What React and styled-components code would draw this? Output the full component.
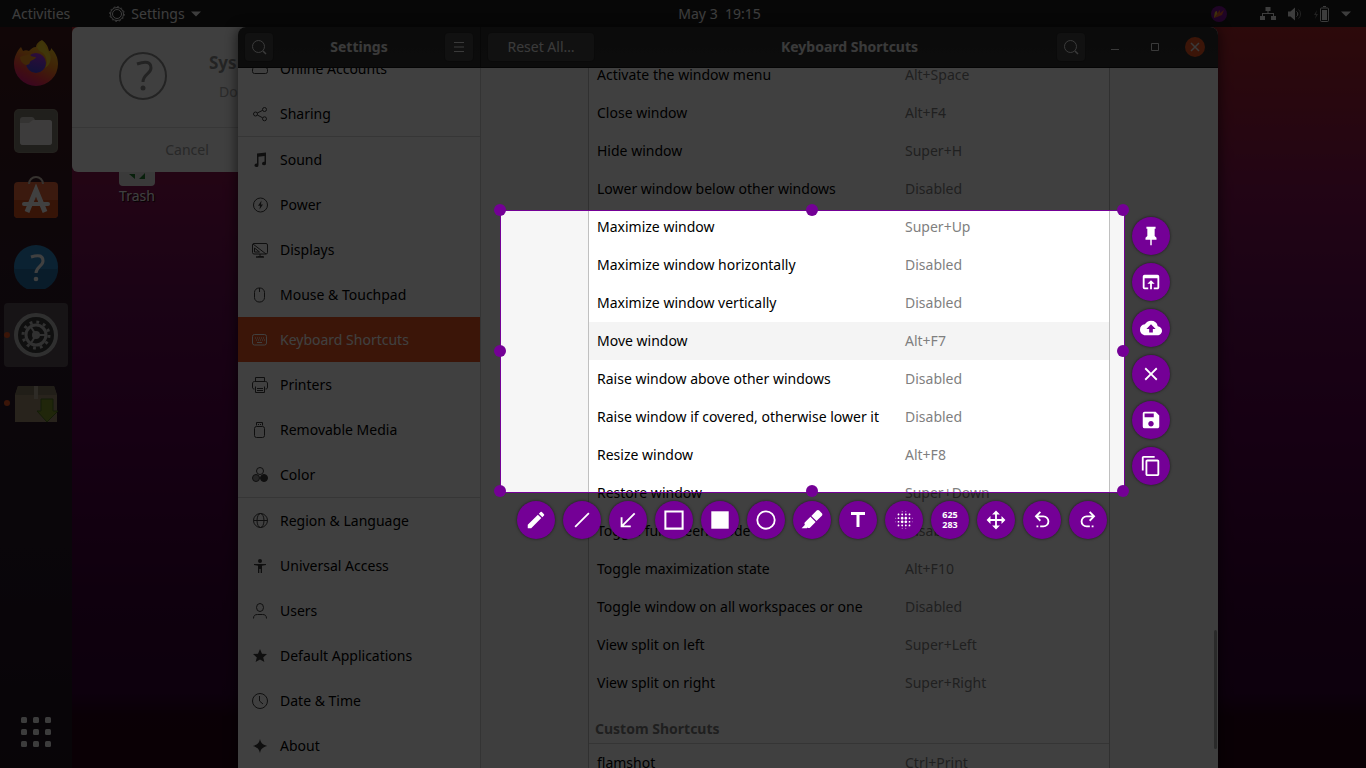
import React from "react";
import styled, { createGlobalStyle } from "styled-components";
import {
  MdBlurOn,
  MdClose,
  MdCloudUpload,
  MdContentCopy,
  MdEdit,
  MdOpenInBrowser,
  MdSave,
  MdTitle,
} from "react-icons/md";

const GlobalStyle = createGlobalStyle`
  * {
    box-sizing: border-box;
  }

  body {
    margin: 0;
    font-family: "Noto Sans", "Open Sans", sans-serif;
    font-size: 14px;
    line-height: 20px;
    color: #000;
  }

  button {
    margin: 0;
    padding: 0;
    border: 0;
    background: none;
    font: inherit;
    color: inherit;
  }

  svg {
    display: block;
    flex: none;
  }
`;

const Screen = styled.div`
  position: relative;
  display: flex;
  flex-direction: column;
  height: 100vh;
  overflow: hidden;
`;

/* Top panel */

const TopBar = styled.header`
  display: grid;
  grid-template-columns: 1fr auto 1fr;
  align-items: center;
  height: 27px;
  flex: none;
  padding: 0 15px 0 12px;
  background: #1c1c1c;
  color: #f2f2f2;
`;

const TopLeft = styled.div`
  display: flex;
  align-items: center;
  gap: 39px;
`;

const AppMenu = styled.button`
  display: flex;
  align-items: center;
  gap: 6px;
`;

const Clock = styled.button`
  padding-left: 76px;
  white-space: pre;
`;

const Tray = styled.div`
  display: flex;
  align-items: center;
  justify-content: flex-end;
  gap: 11px;

  svg:first-child {
    margin-right: 22px;
  }
`;

/* Desktop and dock */

const Desktop = styled.div`
  display: flex;
  flex: 1;
  min-height: 0;
  background: linear-gradient(
    #b0282c 0%,
    #9c1c40 12%,
    #881454 22%,
    #680c54 38%,
    #58004c 55%,
    #3c0038 78%,
    #340034 90%,
    #280018 93%,
    #280014 100%
  );
`;

const Dock = styled.nav`
  display: flex;
  flex-direction: column;
  gap: 4px;
  width: 72px;
  flex: none;
  padding: 4px;
  background: linear-gradient(#44181c, #301c2c 40%, #28182a 70%, #20141f);
`;

const DockItem = styled.button`
  position: relative;
  display: flex;
  align-items: center;
  justify-content: center;
  width: 64px;
  height: 64px;
  border-radius: 4px;
  background: ${(props) => (props.$active ? "#5c5058" : "none")};

  &:last-child {
    margin-top: auto;
  }
`;

const RunningDot = styled.span`
  position: absolute;
  left: 0;
  width: 6px;
  height: 6px;
  border-radius: 3px;
  background: #e95420;
`;

const Workspace = styled.main`
  position: relative;
  isolation: isolate;
  flex: 1;
  min-width: 0;
`;

const TrashIcon = styled.div`
  position: absolute;
  top: 123px;
  left: 37px;
  display: flex;
  flex-direction: column;
  align-items: center;
  width: 56px;
  color: #fff;
  text-shadow: 1px 1px 1px #000;
`;

const Dialog = styled.section`
  position: absolute;
  top: 0;
  left: 0;
  width: 460px;
  border-radius: 6px;
  background: #fafafa;
`;

const DialogBody = styled.div`
  display: flex;
  gap: 42px;
  height: 101px;
  padding: 25px 0 0 47px;
  border-bottom: 1px solid #dcdcdc;
`;

const DialogText = styled.div`
  display: flex;
  flex-direction: column;
  gap: 8px;
  color: #a8a8a8;

  h2 {
    margin: 0;
    font-size: 17px;
    line-height: 22px;
    color: #8c8c8c;
  }

  p {
    margin: 0;
    padding-left: 10px;
  }
`;

const DialogButton = styled.button`
  width: 50%;
  height: 44px;
  color: #a0a0a0;
`;

/* Settings window */

const Window = styled.section`
  position: absolute;
  top: 0;
  bottom: 0;
  left: 166px;
  right: 148px;
  display: grid;
  grid-template-columns: 243px 1fr;
  grid-template-rows: 41px 1fr;
  border-radius: 8px 8px 0 0;
  overflow: hidden;
  background: #f6f6f6;
  box-shadow: 0 2px 12px 2px rgba(0, 0, 0, 0.5);
`;

const HeaderBar = styled.header`
  z-index: 1;
  display: grid;
  grid-template-columns: 1fr auto 1fr;
  align-items: center;
  padding: 0 7px;
  background: linear-gradient(#2c2c2c, #323232);
  border-bottom: 1px solid #161616;
  border-right: ${(props) => (props.$split ? "1px solid #1c1c1c" : "0")};
  color: #e8e8e8;

  h1 {
    margin: 0;
    font-size: 14px;
    line-height: 20px;
  }
`;

const HeaderButton = styled.button`
  display: flex;
  align-items: center;
  justify-content: center;
  width: ${(props) => (props.$wide ? "106px" : "28px")};
  height: 28px;
  border-radius: 4px;
  background: #444;
  box-shadow: 0 0 0 1px #2a2a2a;
`;

const HeaderEnd = styled.div`
  display: flex;
  align-items: center;
  justify-content: flex-end;
  gap: 20px;
  padding-right: ${(props) => (props.$controls ? "6px" : "0")};
`;

const WindowButton = styled.button`
  display: flex;
  align-items: center;
  justify-content: center;
  width: 20px;
  height: 20px;
  border-radius: 10px;
  background: ${(props) => (props.$close ? "#e95420" : "none")};
`;

const Sidebar = styled.nav`
  min-height: 0;
  overflow: hidden;
  background: #fff;
  border-right: 1px solid #d0d0d0;
`;

const SidebarList = styled.ul`
  margin: -22px 0 0;
  padding: 0;
  list-style: none;
`;

const SidebarEntry = styled.li`
  border-bottom: ${(props) => (props.$divider ? "1px solid #d8d8d8" : "0")};
`;

const SidebarLink = styled.a`
  display: flex;
  align-items: center;
  gap: 12px;
  height: 45px;
  padding-left: 14px;
  text-decoration: none;
  color: ${(props) => (props.$active ? "#fff" : "#000")};
  background: ${(props) => (props.$active ? "#e95420" : "none")};

  svg {
    color: ${(props) => (props.$active ? "#fff" : "#3c3c3c")};
  }
`;

const Content = styled.div`
  position: relative;
  display: flex;
  justify-content: center;
  min-height: 0;
  padding-right: 1px;
  overflow: hidden;
`;

const ShortcutPanel = styled.div`
  width: 522px;
  margin-top: -12px;
  border: solid #c0c0c0;
  border-width: 0 1px;
  background: #fff;

  h2 {
    margin: 0;
    padding: 16px 6px 3px;
    border-bottom: 1px solid #d4d4d4;
    font-size: 14px;
    line-height: 22px;
    color: #7c7c7c;
  }
`;

const ShortcutTable = styled.table`
  width: 100%;
  table-layout: fixed;
  border-collapse: collapse;
`;

const ShortcutRow = styled.tr`
  height: 38px;
  background: ${(props) => (props.$hover ? "#f4f4f4" : "#fff")};
`;

const ShortcutName = styled.th`
  width: 316px;
  padding: 0 0 0 8px;
  text-align: left;
  font-weight: 400;
  white-space: nowrap;
`;

const ShortcutKeys = styled.td`
  padding: 0;
  color: #7f7f7f;
`;

const ScrollThumb = styled.div`
  position: absolute;
  right: 1px;
  bottom: 19px;
  width: 3px;
  height: 119px;
  border-radius: 2px;
  background: #a8a8a8;
`;

/* Capture overlay: everything outside the selection is dimmed by its shadow */

const Selection = styled.div`
  position: absolute;
  top: 210px;
  left: 500px;
  width: 625px;
  height: 283px;
  border: 1px solid #740096;
  box-shadow: 0 0 0 3000px rgba(0, 0, 0, 0.75);
`;

const Handle = styled.span`
  position: absolute;
  left: ${(props) => props.$x};
  top: ${(props) => props.$y};
  width: 12px;
  height: 12px;
  margin: -7px 0 0 -7px;
  border-radius: 6px;
  background: #740096;
`;

const ToolRow = styled.div`
  position: absolute;
  top: 290px;
  left: 16px;
  display: flex;
  gap: 8px;
`;

const ToolColumn = styled.div`
  position: absolute;
  top: 6px;
  left: 631px;
  display: flex;
  flex-direction: column;
  gap: 8px;
`;

const ToolButton = styled.button`
  display: flex;
  align-items: center;
  justify-content: center;
  width: 38px;
  height: 38px;
  border-radius: 19px;
  background: #740096;
  box-shadow: 0 0 3px rgba(0, 0, 0, 0.6);
  color: #fff;
  font-size: 9px;
  font-weight: 700;
  line-height: 10px;
`;

const Glyph = ({ size = 22, d }) => (
  <svg width={size} height={size} viewBox="0 0 24 24" fill="currentColor" aria-hidden="true">
    <path d={d} />
  </svg>
);

const Symbolic = ({ children, size = 16 }) => (
  <svg
    width={size}
    height={size}
    viewBox="0 0 16 16"
    fill="none"
    stroke="currentColor"
    aria-hidden="true"
  >
    {children}
  </svg>
);

const Caret = () => (
  <svg width="10" height="6" viewBox="0 0 10 6" fill="currentColor" aria-hidden="true">
    <path d="M0 .5h10L5 5.5z" />
  </svg>
);

const SearchIcon = () => (
  <Symbolic>
    <circle cx="7.5" cy="7.5" r="6" />
    <path d="M12 12l3 3" strokeWidth="1.5" />
  </Symbolic>
);

const sidebarItems = [
  {
    label: "Online Accounts",
    icon: <path d="M2.500 12.500h11a2 2 0 0 0 2-2V8.500a2 2 0 0 0-2-2 5 5 0 0 0-9-1 3.500 3.500 0 0 0-4 3.500v1.500a2 2 0 0 0 2 2z" />,
  },
  {
    label: "Sharing",
    divider: true,
    icon: (
      <>
        <circle cx="3.500" cy="8" r="2" />
        <circle cx="12.500" cy="3.500" r="2" />
        <circle cx="12.500" cy="12.800" r="2" />
        <path d="M5.300 7l5.400-2.700M5.300 9l5.400 2.800" />
      </>
    ),
  },
  {
    label: "Sound",
    icon: (
      <path
        d="M5 1.500l9-1v11a2 1.800 0 1 1-1.500-1.700V4l-6 .7v8.500a2 1.800 0 1 1-1.500-1.700z"
        fill="currentColor"
        stroke="none"
      />
    ),
  },
  {
    label: "Power",
    icon: (
      <>
        <circle cx="8.500" cy="8" r="7" />
        <path d="M9.500 3.500L6 8.800h2l-.5 3.700L11 7.400H9z" fill="currentColor" stroke="none" />
      </>
    ),
  },
  {
    label: "Displays",
    icon: (
      <>
        <rect x=".5" y="1.500" width="15" height="10.500" rx="1.500" />
        <path d="M1 2l13 10M2.500 6v4h5zM6 14.500h5M8 12v2" />
        <path d="M4 15h8" strokeWidth="1.500" />
      </>
    ),
  },
  {
    label: "Mouse & Touchpad",
    icon: (
      <>
        <rect x="2.500" y="1" width="10" height="14" rx="4.500" />
        <path d="M7.500 1v4" />
      </>
    ),
  },
  {
    label: "Keyboard Shortcuts",
    active: true,
    icon: (
      <>
        <rect x=".5" y="2.500" width="14" height="10.500" rx="2" />
        <path d="M3 6h10M4 8h9" strokeDasharray="1 1" />
        <path d="M5 10.500h5" />
      </>
    ),
  },
  {
    label: "Printers",
    icon: (
      <>
        <path d="M3.500 4.500v-4h9v4M2.500 12C1 12 .5 11.500.5 10V7C.5 5.500 1 4.500 2.500 4.500h11c1.500 0 2 1 2 2.500v3c0 1.500-.5 2-2 2" />
        <path d="M3.500 9.500v6h9v-6M5 11.500h6M5 13.500h6" />
      </>
    ),
  },
  {
    label: "Removable Media",
    icon: (
      <>
        <rect x="2.500" y="4.500" width="10" height="11" rx="2" />
        <path d="M4.500 3.500v-3h6v3M6 2.500h1M8 2.500h1" />
      </>
    ),
  },
  {
    label: "Color",
    divider: true,
    icon: (
      <>
        <circle cx="8" cy="4" r="3.500" />
        <circle cx="4" cy="11" r="3.500" fill="currentColor" fillOpacity=".5" />
        <circle cx="12" cy="11" r="3.500" fill="currentColor" />
      </>
    ),
  },
  {
    label: "Region & Language",
    icon: (
      <>
        <circle cx="8.500" cy="7.500" r="7" />
        <ellipse cx="8.500" cy="7.500" rx="3.500" ry="7" />
        <path d="M1.500 7.500h14" />
      </>
    ),
  },
  {
    label: "Universal Access",
    icon: (
      <g fill="currentColor" stroke="none">
        <circle cx="8" cy="3" r="2" />
        <path d="M2 6h12v1l-4 .8V15H8.700v-4H7.300v4H6V7.800L2 7z" />
      </g>
    ),
  },
  {
    label: "Users",
    icon: (
      <>
        <ellipse cx="8" cy="4.500" rx="3.500" ry="4" />
        <path d="M1.500 15.500c0-3 1.500-4 4-4h5c2.500 0 4 1 4 4" />
      </>
    ),
  },
  {
    label: "Default Applications",
    icon: (
      <path
        d="M8 1l2 4.700 5 .4-3.800 3.300L12.400 14 8 11.500 3.600 14l1.200-4.600L1 6.100l5-.4z"
        fill="currentColor"
        stroke="none"
      />
    ),
  },
  {
    label: "Date & Time",
    icon: (
      <>
        <circle cx="8" cy="8" r="7.500" />
        <path d="M7.500 3v5l3.500 3" />
      </>
    ),
  },
  {
    label: "About",
    icon: (
      <path
        d="M8 .8c.8 4 2 5.600 7.200 7.200C10 9.600 8.800 11.200 8 15.200 7.200 11.200 6 9.600.8 8 6 6.400 7.200 4.800 8 .8z"
        fill="currentColor"
        stroke="none"
      />
    ),
  },
];

const shortcuts = [
  ["Activate the window menu", "Alt+Space"],
  ["Close window", "Alt+F4"],
  ["Hide window", "Super+H"],
  ["Lower window below other windows", "Disabled"],
  ["Maximize window", "Super+Up"],
  ["Maximize window horizontally", "Disabled"],
  ["Maximize window vertically", "Disabled"],
  ["Move window", "Alt+F7"],
  ["Raise window above other windows", "Disabled"],
  ["Raise window if covered, otherwise lower it", "Disabled"],
  ["Resize window", "Alt+F8"],
  ["Restore window", "Super+Down"],
  ["Toggle fullscreen mode", "Disabled"],
  ["Toggle maximization state", "Alt+F10"],
  ["Toggle window on all workspaces or one", "Disabled"],
  ["View split on left", "Super+Left"],
  ["View split on right", "Super+Right"],
];

const customShortcuts = [["flamshot", "Ctrl+Print"]];

const PIN = "M16,12V4H17V2H7V4H8V12L6,14V16H11.2V22H12.8V16H18V14L16,12Z";
const MARKER =
  "M18.5,1.15C17.97,1.15 17.46,1.34 17.07,1.73L11.26,7.55L16.91,13.2L22.73,7.39C23.5,6.61 23.5,5.35 22.73,4.56L19.89,1.73C19.5,1.34 19,1.15 18.5,1.15M10.3,8.5L4.34,14.46C3.56,15.24 3.56,16.5 4.36,17.31C3.14,18.54 1.9,19.77 0.67,21H6.33L7.19,20.14C7.97,20.9 9.22,20.89 10,20.12L15.95,14.16";
const MOVE =
  "M13,6V11H18V7.75L22.25,12L18,16.25V13H13V18H16.25L12,22.25L7.75,18H11V13H6V16.25L1.75,12L6,7.75V11H11V6H7.75L12,1.75L16.25,6H13Z";
const UNDO =
  "M13.5,7A6.5,6.5 0 0,1 20,13.5A6.5,6.5 0 0,1 13.5,20H10V18H13.5C16,18 18,16 18,13.5C18,11 16,9 13.5,9H7.83L10.91,12.09L9.5,13.5L4,8L9.5,2.5L10.92,3.91L7.83,7H13.5M6,18H8V20H6V18Z";
const REDO =
  "M10.5,7A6.5,6.5 0 0,0 4,13.5A6.5,6.5 0 0,0 10.5,20H14V18H10.5C8,18 6,16 6,13.5C6,11 8,9 10.5,9H16.17L13.09,12.09L14.5,13.5L20,8L14.5,2.5L13.08,3.91L16.17,7H10.5M18,18H16V20H18V18Z";

const drawTools = [
  { name: "Pencil", icon: <MdEdit size={22} /> },
  { name: "Line", icon: <Glyph d="M18.800 3.800l1.400 1.400L5.200 20.200l-1.400-1.400z" /> },
  { name: "Arrow", icon: <Glyph d="M20 5.400L18.600 4 6 16.600V9H4v11h11v-2H7.400z" /> },
  { name: "Rectangle outline", icon: <Glyph d="M1.500 1.500h21v21h-21zM3.700 3.700v16.600h16.600V3.700z" /> },
  { name: "Rectangle", icon: <Glyph d="M2.500 2.500h19v19h-19z" /> },
  {
    name: "Circle",
    icon: (
      <svg width="22" height="22" viewBox="0 0 24 24" fill="none" stroke="currentColor" strokeWidth="2" aria-hidden="true">
        <circle cx="12" cy="12" r="9.500" />
      </svg>
    ),
  },
  { name: "Marker", icon: <Glyph d={MARKER} /> },
  { name: "Text", icon: <MdTitle size={24} /> },
  { name: "Blur", icon: <MdBlurOn size={22} /> },
  { name: "Selection size", icon: <span>625<br />283</span> },
  { name: "Move", icon: <Glyph d={MOVE} /> },
  { name: "Undo", icon: <Glyph d={UNDO} /> },
  { name: "Redo", icon: <Glyph d={REDO} /> },
];

const actionTools = [
  { name: "Pin", icon: <Glyph d={PIN} /> },
  { name: "Open with", icon: <MdOpenInBrowser size={22} /> },
  { name: "Upload", icon: <MdCloudUpload size={22} /> },
  { name: "Close", icon: <MdClose size={22} /> },
  { name: "Save", icon: <MdSave size={22} /> },
  { name: "Copy", icon: <MdContentCopy size={22} /> },
];

const handles = [
  ["0%", "0%"],
  ["50%", "0%"],
  ["100%", "0%"],
  ["0%", "50%"],
  ["100%", "50%"],
  ["0%", "100%"],
  ["50%", "100%"],
  ["100%", "100%"],
];

const FirefoxLogo = () => (
  <svg width="46" height="48" viewBox="0 0 46 48" aria-hidden="true">
    <defs>
      <linearGradient id="fox" x1=".8" y1="0" x2=".3" y2="1">
        <stop offset="0" stopColor="#ffe226" />
        <stop offset=".45" stopColor="#ff8a1e" />
        <stop offset=".75" stopColor="#ff3b47" />
        <stop offset="1" stopColor="#e31587" />
      </linearGradient>
      <linearGradient id="globe" x1=".6" y1="0" x2=".4" y2="1">
        <stop offset="0" stopColor="#b833e1" />
        <stop offset="1" stopColor="#4348e0" />
      </linearGradient>
    </defs>
    <path
      d="M29 1c5 4 6 7 7 11 2 0 2-2 2-3 5 5 7 10 7 16a22 22 0 0 1-44 0C1 18 4 12 8 8l2 4c2-1 4-1 6 0 2-2 4-4 7-4 0-3 2-5 6-7z"
      fill="url(#fox)"
    />
    <circle cx="23" cy="24" r="10" fill="url(#globe)" />
    <path d="M7 18c4-2 8-2 10-3 0 2 2 3 6 3-1 3-5 3-6 5 0 2-2 3-4 3-3-1-6-4-6-8z" fill="#ff9a20" />
    <path d="M24 8c1 3 3 4 6 6 4 4 5 10 2 15 7-4 7-13 3-17-2-3-4-6-5-10-3 2-5 4-6 6z" fill="#ffd828" />
  </svg>
);

const FilesLogo = () => (
  <svg width="44" height="44" viewBox="0 0 44 44" aria-hidden="true">
    <rect width="44" height="44" rx="5" fill="#8c8878" />
    <rect x="1" y="1" width="42" height="42" rx="4" fill="#807c70" />
    <path d="M6 11q0-3 3-3h9q2 0 3 3h14q3 0 3 3v19q0 3-3 3H9q-3 0-3-3z" fill="#d0ccc8" />
    <path d="M6 14h9l4-3h16q3 0 3 3v19q0 3-3 3H9q-3 0-3-3z" fill="#f2f0ee" />
  </svg>
);

const SoftwareLogo = () => (
  <svg width="44" height="46" viewBox="0 1 44 46" fill="none" aria-hidden="true">
    <rect y="7" width="44" height="36" rx="4" fill="#e9683c" />
    <path d="M0 25h44v14q0 4-4 4H4q-4 0-4-4z" fill="#d8501c" />
    <path d="M15 9a7 7 0 0 1 14 0" stroke="#d8c8bc" strokeWidth="2" />
    <path d="M13 37l9-22 9 22" stroke="#fff" strokeWidth="5" />
    <path d="M10 29h24" stroke="#fff" strokeWidth="4" strokeLinecap="round" />
  </svg>
);

const HelpLogo = () => (
  <svg width="44" height="44" viewBox="0 0 44 44" fill="none" aria-hidden="true">
    <circle cx="22" cy="22" r="22" fill="#2f88c8" />
    <path d="M0 24a22 22 0 0 0 44 0z" fill="#2472a8" />
    <path d="M17 12q12-4 12 4c0 5-7 6-7 12" stroke="#fff" strokeWidth="3" />
    <circle cx="22" cy="34" r="2.300" fill="#fff" />
  </svg>
);

const SettingsLogo = () => (
  <svg width="44" height="44" viewBox="0 0 44 44" fill="none" aria-hidden="true">
    <circle cx="22" cy="22" r="20" fill="#3c3c3c" stroke="#bcbcbc" strokeWidth="4" />
    <circle cx="22" cy="22" r="10" stroke="#c4c4c4" strokeWidth="3" />
    <circle cx="22" cy="22" r="13" stroke="#c4c4c4" strokeWidth="3" strokeDasharray="2.800 4.007" />
    <circle cx="22" cy="22" r="4" fill="#c4c4c4" />
    <path d="M22 22h10M22 22l-5-8M22 22l-5 8" stroke="#c4c4c4" strokeWidth="2" />
  </svg>
);

const PackageLogo = () => (
  <svg width="46" height="40" viewBox="0 0 46 40" aria-hidden="true">
    <path d="M5 3h36l3 9v27H2V12z" fill="#a08c70" />
    <path d="M5 3h36l3 9H2z" fill="#847860" />
    <path d="M21 3h4v13h-4z" fill="#b8ac98" />
    <path d="M28 16h12v12h5L34 39 24 28h4z" fill="#809828" stroke="#4c7020" />
  </svg>
);

const AppsGrid = () => (
  <svg width="30" height="30" viewBox="0 0 30 30" fill="#f0f0f0" aria-hidden="true">
    {[0, 12, 24].map((y) =>
      [0, 12, 24].map((x) => <rect key={x + "-" + y} x={x} y={y} width="6" height="6" rx="1.500" />)
    )}
  </svg>
);

const dockItems = [
  { name: "Firefox", icon: <FirefoxLogo /> },
  { name: "Files", icon: <FilesLogo /> },
  { name: "Software", icon: <SoftwareLogo /> },
  { name: "Help", icon: <HelpLogo /> },
  { name: "Settings", icon: <SettingsLogo />, active: true, running: true },
  { name: "Package installer", icon: <PackageLogo />, running: true },
  { name: "Show applications", icon: <AppsGrid /> },
];

const Panel = () => (
  <TopBar>
    <TopLeft>
      <button>Activities</button>
      <AppMenu>
        <Symbolic>
          <circle cx="8" cy="8" r="6.500" />
          <circle cx="8" cy="8" r="4.500" />
          <circle cx="8" cy="8" r="7.300" strokeDasharray="1.800 2.022" />
        </Symbolic>
        Settings
        <Caret />
      </AppMenu>
    </TopLeft>
    <Clock>{"May 3  19:15"}</Clock>
    <Tray>
      <svg width="16" height="16" viewBox="0 0 16 16" aria-hidden="true">
        <circle cx="8" cy="8" r="8" fill="#7c1094" />
        <path d="M3 12l1-6 2-1v2l3-3v3l4-3-2 5-5 2z" fill="#e8602c" />
        <path d="M3 12l1-6 2-1v3z" fill="#f4c430" />
      </svg>
      <svg width="16" height="14" viewBox="0 0 16 14" fill="currentColor" aria-hidden="true">
        <path d="M5.500 0h5v4h-2v2H14v3h2v4h-5V9h2V7H3v2h2v4H0V9h2V6h5.500V4h-2z" />
      </svg>
      <Symbolic>
        <path d="M1 5.500h2.500L8 1.500v13l-4.500-4H1z" fill="currentColor" stroke="none" />
        <path d="M9.500 5.500a3 3 0 0 1 0 5" />
        <path d="M11.500 3.500a6 6 0 0 1 0 9" strokeOpacity=".5" />
      </Symbolic>
      <Symbolic>
        <path d="M3 4L0 9h2l-1 4 3-5H2z" fill="currentColor" stroke="none" opacity=".5" />
        <rect x="6.500" y="2" width="8" height="13.500" rx="1" />
        <path d="M9 .5h3" />
        <path d="M8 4h5v10H8z" fill="currentColor" stroke="none" />
      </Symbolic>
      <Caret />
    </Tray>
  </TopBar>
);

const ShortcutRows = ({ rows, hovered }) => (
  <ShortcutTable>
    <tbody>
      {rows.map(([name, keys]) => (
        <ShortcutRow key={name} $hover={name === hovered}>
          <ShortcutName scope="row">{name}</ShortcutName>
          <ShortcutKeys>{keys}</ShortcutKeys>
        </ShortcutRow>
      ))}
    </tbody>
  </ShortcutTable>
);

const SettingsWindow = () => (
  <Window>
    <HeaderBar $split>
      <HeaderButton aria-label="Search settings">
        <SearchIcon />
      </HeaderButton>
      <h1>Settings</h1>
      <HeaderEnd>
        <HeaderButton aria-label="Menu">
          <Symbolic>
            <path d="M3 3.500h10M3 8h10M3 12.500h10" />
          </Symbolic>
        </HeaderButton>
      </HeaderEnd>
    </HeaderBar>
    <HeaderBar>
      <HeaderButton $wide>Reset All…</HeaderButton>
      <h1>Keyboard Shortcuts</h1>
      <HeaderEnd $controls>
        <HeaderButton aria-label="Search shortcuts">
          <SearchIcon />
        </HeaderButton>
        <WindowButton aria-label="Minimize">
          <Symbolic>
            <path d="M4 10.500h8" />
          </Symbolic>
        </WindowButton>
        <WindowButton aria-label="Maximize">
          <Symbolic>
            <path d="M4.500 4.500h7v7h-7z" />
          </Symbolic>
        </WindowButton>
        <WindowButton $close aria-label="Close window">
          <Symbolic>
            <path d="M4 4l8 8M12 4l-8 8" strokeWidth="1.500" />
          </Symbolic>
        </WindowButton>
      </HeaderEnd>
    </HeaderBar>
    <Sidebar>
      <SidebarList>
        {sidebarItems.map((item) => (
          <SidebarEntry key={item.label} $divider={item.divider}>
            <SidebarLink href="#" $active={item.active}>
              <Symbolic>{item.icon}</Symbolic>
              {item.label}
            </SidebarLink>
          </SidebarEntry>
        ))}
      </SidebarList>
    </Sidebar>
    <Content>
      <ShortcutPanel>
        <ShortcutRows rows={shortcuts} hovered="Move window" />
        <h2>Custom Shortcuts</h2>
        <ShortcutRows rows={customShortcuts} />
      </ShortcutPanel>
      <ScrollThumb />
    </Content>
  </Window>
);

const CaptureOverlay = () => (
  <Selection>
    {handles.map(([x, y]) => (
      <Handle key={x + y} $x={x} $y={y} />
    ))}
    <ToolRow>
      {drawTools.map((tool) => (
        <ToolButton key={tool.name} title={tool.name}>
          {tool.icon}
        </ToolButton>
      ))}
    </ToolRow>
    <ToolColumn>
      {actionTools.map((tool) => (
        <ToolButton key={tool.name} title={tool.name}>
          {tool.icon}
        </ToolButton>
      ))}
    </ToolColumn>
  </Selection>
);

const App = () => (
  <Screen>
    <GlobalStyle />
    <Panel />
    <Desktop>
      <Dock>
        {dockItems.map((item) => (
          <DockItem key={item.name} $active={item.active} aria-label={item.name}>
            {item.running && <RunningDot />}
            {item.icon}
          </DockItem>
        ))}
      </Dock>
      <Workspace>
        <TrashIcon>
          <svg width="36" height="36" viewBox="0 0 36 36" aria-hidden="true">
            <rect width="36" height="36" rx="4" fill="#e8e8e8" />
            <path d="M10 24h6v5zM20 29l6-6v6z" fill="#208030" />
          </svg>
          Trash
        </TrashIcon>
        <Dialog>
          <DialogBody>
            <svg width="48" height="48" viewBox="0 0 48 48" fill="none" stroke="#8c8c8c" aria-hidden="true">
              <circle cx="24" cy="24" r="23" strokeWidth="2" />
              <path d="M18 12q14-5 14 4c0 6-8 6-8 14" strokeWidth="3" />
              <circle cx="24" cy="36" r="2.500" fill="#8c8c8c" stroke="none" />
            </svg>
            <DialogText>
              <h2>Sys</h2>
              <p>Do</p>
            </DialogText>
          </DialogBody>
          <DialogButton>Cancel</DialogButton>
        </Dialog>
        <SettingsWindow />
      </Workspace>
    </Desktop>
    <CaptureOverlay />
  </Screen>
);

export default App;
